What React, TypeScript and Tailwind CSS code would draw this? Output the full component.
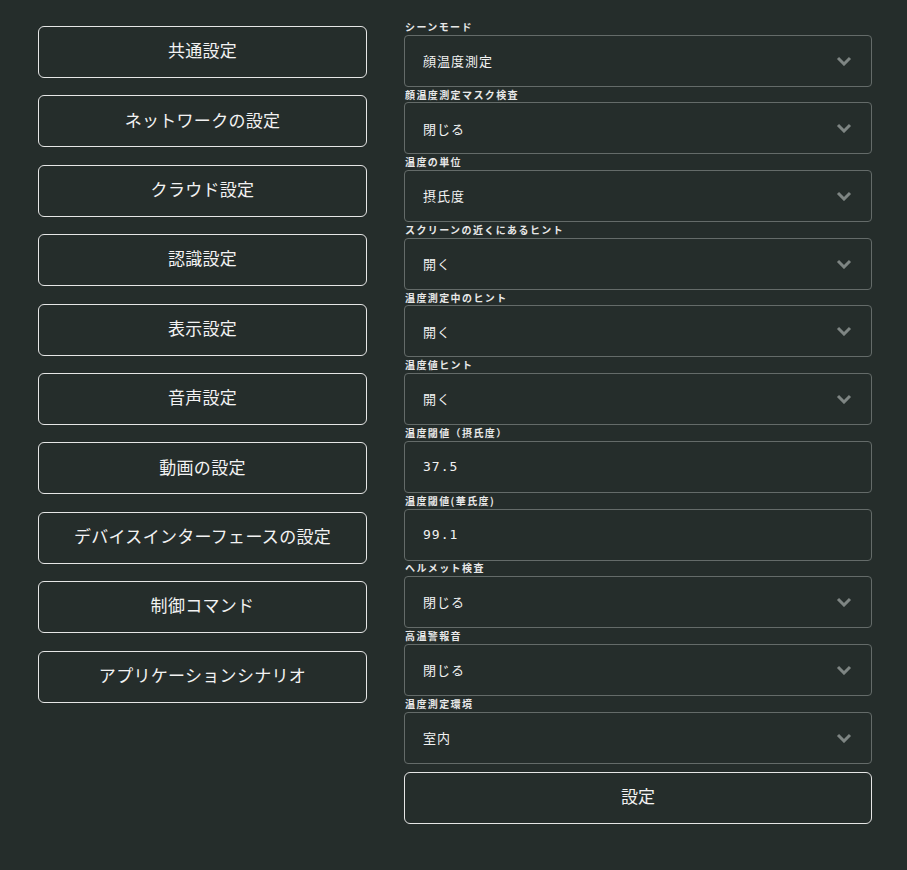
import React from 'react';

const menu = [
  '共通設定',
  'ネットワークの設定',
  'クラウド設定',
  '認識設定',
  '表示設定',
  '音声設定',
  '動画の設定',
  'デバイスインターフェースの設定',
  '制御コマンド',
  'アプリケーションシナリオ',
];

type Field = { label: string; value: string; kind: 'select' | 'input' };

const fields: Field[] = [
  { label: 'シーンモード', value: '顔温度測定', kind: 'select' },
  { label: '顔温度測定マスク検査', value: '閉じる', kind: 'select' },
  { label: '温度の単位', value: '摂氏度', kind: 'select' },
  { label: 'スクリーンの近くにあるヒント', value: '開く', kind: 'select' },
  { label: '温度測定中のヒント', value: '開く', kind: 'select' },
  { label: '温度値ヒント', value: '開く', kind: 'select' },
  { label: '温度閾値（摂氏度）', value: '37.5', kind: 'input' },
  { label: '温度閾値(華氏度)', value: '99.1', kind: 'input' },
  { label: 'ヘルメット検査', value: '閉じる', kind: 'select' },
  { label: '高温警報音', value: '閉じる', kind: 'select' },
  { label: '温度測定環境', value: '室内', kind: 'select' },
];

function Chevron() {
  return (
    <svg width="16" height="10" viewBox="0 0 16 10" className="shrink-0">
      <polyline points="2,2 8,8 14,2" fill="none" stroke="#7e8583" strokeWidth="3" strokeLinejoin="miter" />
    </svg>
  );
}

export default function App() {
  return (
    <div className="min-h-[870px] w-full bg-[#252d2b] text-[#f2f2f2] font-['Noto_Sans_CJK_JP','Noto_Sans',sans-serif]">
      <div className="flex gap-[37px] px-[38px]">
        <div className="flex w-[329px] shrink-0 flex-col gap-[17.4px] pt-[26px]">
          {menu.map((m) => (
            <button
              key={m}
              className="flex h-[52px] items-center justify-center rounded-[6px] border border-[#e6e6e6] pb-[4px] text-[17px] tracking-[0.3px] text-[#f2f2f2]"
            >
              {m}
            </button>
          ))}
        </div>

        <div className="flex w-[468px] shrink-0 flex-col pt-[19px]">
          {fields.map((f) => (
            <div key={f.label} className="flex flex-col">
              <div className="flex h-[15.7px] items-center pl-[1px] text-[10px] font-bold leading-none tracking-[1.4px] text-[#e8e8e8]">
                {f.label}
              </div>
              <div className="flex h-[52px] items-center justify-between rounded-[4px] border border-[#646b69] pl-[18px] pr-[19px]">
                {f.kind === 'input' ? (
                  <span className="font-['DejaVu_Sans_Mono',monospace] text-[13px] tracking-[1px]">{f.value}</span>
                ) : (
                  <span className="text-[13px] tracking-[1px]">{f.value}</span>
                )}
                {f.kind === 'select' && <Chevron />}
              </div>
            </div>
          ))}
          <button className="mt-[8px] flex h-[52px] items-center justify-center rounded-[6px] border border-[#e6e6e6] pb-[3px] text-[17px] text-[#f2f2f2]">
            設定
          </button>
        </div>
      </div>
    </div>
  );
}
